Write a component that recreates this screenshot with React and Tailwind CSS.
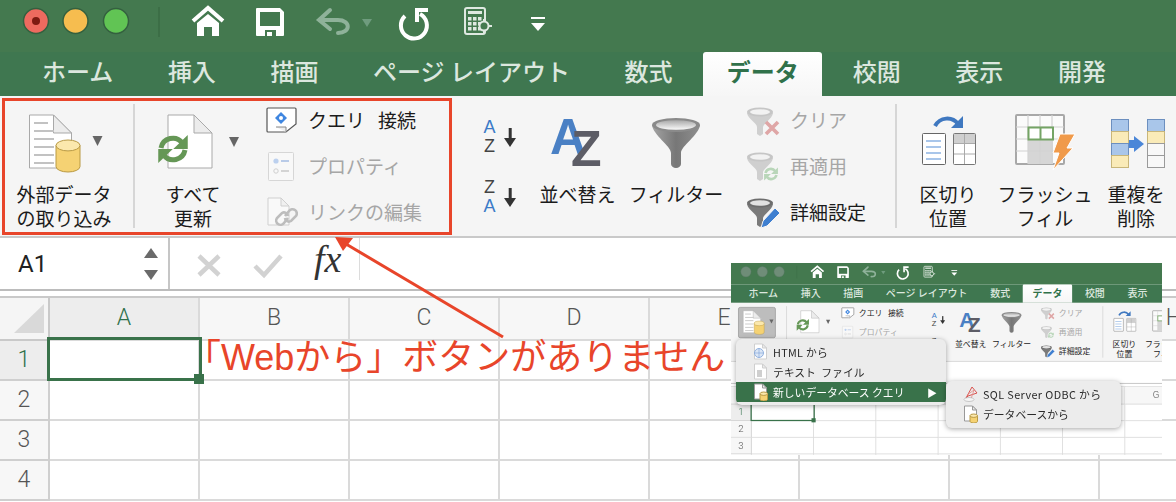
import React from "react";

const Ico = ({ x = 0, y = 0, w, h, children }) => (
  <svg width={w} height={h} viewBox={`${x} ${y} ${w} ${h}`} className="relative block shrink-0">
    {children}
  </svg>
);

const Page = ({ x, y, w, h, f = 18, stroke = "#a9a9a9", fill = "#fff", fold = "#ececec" }) => (
  <g>
    <path d={`M${x} ${y} H${x + w - f} L${x + w} ${y + f} V${y + h} H${x} Z`} fill={fill} stroke={stroke} strokeWidth="1" />
    <path d={`M${x + w - f} ${y} V${y + f} H${x + w} Z`} fill={fold} stroke={stroke} strokeWidth="1" />
  </g>
);

const Cyl = ({ x, y, w, h }) => {
  const ry = w / 4.4;
  return (
    <g>
      <path d={`M${x} ${y + ry} V${y + h - ry} A${w / 2} ${ry} 0 0 0 ${x + w} ${y + h - ry} V${y + ry} Z`} fill="#f5d273" stroke="#b99a45" strokeWidth="1" />
      <ellipse cx={x + w / 2} cy={y + ry} rx={w / 2} ry={ry} fill="#fbe8ad" stroke="#b99a45" strokeWidth="1" />
    </g>
  );
};

const Sync = ({ cx, cy, r, sw, c }) => (
  <g fill="none" stroke={c} strokeWidth={sw}>
    <path d={`M${cx - r} ${cy - 1} A${r} ${r} 0 0 1 ${cx + r * 0.78} ${cy - r * 0.5}`} />
    <path d={`M${cx + r} ${cy + 1} A${r} ${r} 0 0 1 ${cx - r * 0.78} ${cy + r * 0.5}`} />
    <path d={`M${cx + r + sw * 0.55} ${cy - r - sw * 0.4} V${cy} H${cx + r * 0.02} Z`} fill={c} stroke="none" />
    <path d={`M${cx - r - sw * 0.55} ${cy + r + sw * 0.4} V${cy} H${cx - r * 0.02} Z`} fill={c} stroke="none" />
  </g>
);

const Funnel = ({ y, c1, c2, rim }) => (
  <g>
    <path d={`M747 ${y + 6} C748 ${y + 12} 757 ${y + 16} 757 ${y + 20} V${y + 27} L760 ${y + 29} L763 ${y + 27} V${y + 20} C764 ${y + 16} 772 ${y + 12} 773 ${y + 6} Z`} fill={c1} />
    <ellipse cx="760" cy={y + 5} rx="13" ry="4.5" fill={rim} />
    <ellipse cx="760" cy={y + 5} rx="10" ry="2.8" fill={c2} />
  </g>
);

const Dd = ({ x, y }) => <polygon points={`${x - 5},${y - 5} ${x + 5},${y - 5} ${x},${y + 5}`} fill="#666" />;

function TitleBar({ inset }) {
  return (
    <div className="flex h-[52px] items-start bg-[#44794f]">
      <Ico w={160} h={52}>
        {inset ? (
          <g fill="#6f8d78" stroke="#557560">
            <circle cx="36" cy="21" r="12.5" />
            <circle cx="75.5" cy="21" r="12.5" />
            <circle cx="116" cy="21" r="12.5" />
          </g>
        ) : (
          <g strokeWidth="1.5">
            <circle cx="36" cy="21" r="12.5" fill="#ee6a5f" stroke="#34603f" />
            <circle cx="36" cy="21" r="4" fill="#7e1a12" />
            <circle cx="75.5" cy="21" r="12.5" fill="#f6bd4f" stroke="#34603f" />
            <circle cx="116" cy="21" r="12.5" fill="#61c454" stroke="#34603f" />
          </g>
        )}
        <rect x="158.5" y="7" width="1" height="30" fill="#35643f" />
      </Ico>
      <Ico x={160} w={400} h={52}>
        <path d="M193 21 L208 8 L223 21" fill="none" stroke="#fff" strokeWidth="4" />
        <path d="M197 23 L208 14 L219 23 V36 H212 V27 H204 V36 H197 Z" fill="#fff" />
        <path d="M257 8 H280 L284 12 V35 Q284 36 283 36 H257 Q256 36 256 35 V9 Q256 8 257 8 Z" fill="#fff" />
        <rect x="260" y="12" width="20" height="14" fill="#44794f" />
        <rect x="265" y="30" width="11" height="6" fill="#44794f" />
        <rect x="267" y="32" width="5" height="4" fill="#fff" />
        <g fill="none" stroke="#8fb29a" strokeWidth="4" strokeLinecap="round">
          <path d="M330 10 L319 20 L330 29" />
          <path d="M320 20 H338 C351 20 351 33 338 33" />
        </g>
        <polygon points="362,19 372,19 367,27" fill="#6f9c7e" />
        <g fill="none" stroke="#fff" strokeWidth="4">
          <path d="M405 16 A13 13 0 1 0 420 14" />
          <path d="M428 10 H417 V22" />
        </g>
        <rect x="465" y="8" width="20" height="26" rx="2" fill="#44794f" stroke="#dfe9e1" strokeWidth="2" />
        <rect x="468" y="11" width="14" height="3" fill="#dfe9e1" />
        <g fill="#dfe9e1">
          {[17, 22, 27].map((yy) =>
            [468, 473, 478].map((xx) => <rect key={`${xx}-${yy}`} x={xx} y={yy} width="3.5" height="3.5" />)
          )}
        </g>
        <circle cx="484" cy="26" r="4.5" fill="#44794f" stroke="#dfe9e1" strokeWidth="2" />
        <path d="M484 19 V21 M484 31 V33 M489 26 H492" stroke="#dfe9e1" strokeWidth="2" />
        <rect x="531" y="17" width="14" height="2" fill="#fff" />
        <polygon points="531,23 545,23 538,31" fill="#fff" />
      </Ico>
    </div>
  );
}

function Tabs() {
  const tab = "px-[24px] text-[24px] leading-[38px] font-medium text-[#dce7df] whitespace-nowrap";
  return (
    <div className="flex h-[44px] gap-[6.6px] bg-[#3f7750] pl-[18px]">
      <div className={tab}>ホーム</div>
      <div className={tab}>挿入</div>
      <div className={tab}>描画</div>
      <div className={tab}>ページ レイアウト</div>
      <div className={tab}>数式</div>
      <div className="rounded-t-[3px] bg-gradient-to-b from-white to-[#f6f6f6] px-[23.5px] text-[24px] font-bold leading-[38px] text-[#30714a]">データ</div>
      <div className={tab}>校閲</div>
      <div className={tab}>表示</div>
      <div className={tab}>開発</div>
    </div>
  );
}

const Large = ({ className, lines, children, bg }) => (
  <div className={`relative flex shrink-0 flex-col items-center ${className}`}>
    {bg}
    {children}
    <div className="whitespace-nowrap text-center text-[19px] leading-[24px] text-[#1b1b1b]">
      {lines.map((l) => (
        <div key={l}>{l}</div>
      ))}
    </div>
  </div>
);

const Small = ({ icon, children, dim, gap }) => (
  <div className={`flex h-[46px] items-center text-[19px] whitespace-nowrap ${gap} ${dim ? "text-[#a6a6a6]" : "text-[#1b1b1b]"}`}>
    {icon}
    <div>{children}</div>
  </div>
);

const Sep = ({ className }) => <div className={`mt-[8px] h-[124px] w-[2px] shrink-0 bg-[#d6d6d6] ${className}`} />;

function Ribbon({ selected }) {
  return (
    <div className="flex h-[142px] border-b-2 border-[#c9c9c9] bg-[#f5f5f5] pl-[4px]">
      <Large
        className="w-[120px]"
        lines={["外部データ", "の取り込み"]}
        bg={selected ? <div className="absolute left-[13px] top-[10px] h-[75px] w-[91px] rounded-[5px] border-2 border-[#9f9f9f] bg-[#bdbdbd]" /> : null}
      >
        <Ico x={4} y={96} w={120} h={86}>
          <Page x={29.5} y={115} w={42} h={53} />
          <g fill="#c2c2c2">
            {[122, 130, 138, 146, 154, 162].map((y) => (
              <rect key={y} x="34" y={y} width={y < 130 ? 14 : 20} height="2" />
            ))}
          </g>
          <Cyl x={56} y={140} w={24} h={32} />
          <Dd x={97.5} y={141} />
        </Ico>
      </Large>
      <Sep className="ml-[9px]" />
      <Large className="ml-[8px] w-[100px]" lines={["すべて", "更新"]}>
        <Ico x={143} y={96} w={100} h={86}>
          <Page x={168} y={115} w={44} h={53} />
          <Sync cx={173} cy={149} r={12} sw={5} c="#659756" />
          <Dd x={234} y={142} />
        </Ico>
      </Large>
      <div className="ml-[21px] w-[212px] shrink-0 pt-px">
        <Small
          gap="gap-[4px]"
          icon={
            <Ico x={264} y={97} w={40} h={46}>
              <path d="M268 108 H295 a1 1 0 0 1 1 1 V124 L286 132 H268 a1 1 0 0 1 -1 -1 V109 a1 1 0 0 1 1 -1 Z" fill="#fff" stroke="#555" strokeWidth="1.2" />
              <path d="M276 127 H286 V132" fill="#eee" stroke="#888" />
              <path d="M281 112 L287 118 L281 124 L275 118 Z" fill="#3f86e0" />
              <circle cx="281" cy="118" r="2" fill="#fff" />
            </Ico>
          }
        >
          クエリ<span className="ml-[13px]">接続</span>
        </Small>
        <Small
          dim
          gap="gap-[4px]"
          icon={
            <Ico x={264} y={143} w={40} h={46}>
              <rect x="268.5" y="152.5" width="25" height="28" rx="1" fill="#f8f8f8" stroke="#d6d6d6" />
              <circle cx="276" cy="161" r="2.6" fill="#bcd0ee" />
              <circle cx="276" cy="171" r="2.2" fill="none" stroke="#cfcfcf" />
              <rect x="281" y="160" width="8" height="2" fill="#b9cbe8" />
              <rect x="281" y="170" width="8" height="2" fill="#d4d4d4" />
            </Ico>
          }
        >
          プロパティ
        </Small>
        <Small
          dim
          gap="gap-[4px]"
          icon={
            <Ico x={264} y={189} w={40} h={46}>
              <Page x={268} y={198} w={21} h={27} f={8} stroke="#cfcfcf" fill="#f9f9f9" fold="#f0f0f0" />
              <g fill="none" stroke="#bdbdbd" strokeWidth="2.6">
                <path d="M285 216 L289 211 A4 4 0 0 1 296 216 L291 221 A4 4 0 0 1 285 218" />
                <path d="M288 218 L284 223 A4 4 0 0 1 277 218 L282 213 A4 4 0 0 1 288 216" />
              </g>
            </Ico>
          }
        >
          リンクの編集
        </Small>
      </div>
      <div className="w-[59px] shrink-0">
        <Ico x={476} y={96} w={59} h={130}>
          <g fontFamily="'Liberation Sans',sans-serif" fontSize="18">
            <text x="483.5" y="133" fill="#3c7bc8">A</text>
            <text x="484" y="152" fill="#444">Z</text>
            <text x="484" y="193" fill="#444">Z</text>
            <text x="483.5" y="212" fill="#3c7bc8">A</text>
          </g>
          <g fill="#333">
            <rect x="508.7" y="128" width="3" height="12" />
            <polygon points="504,138 516,138 510,147" />
            <rect x="508.7" y="188" width="3" height="12" />
            <polygon points="504,198 516,198 510,207" />
          </g>
        </Ico>
      </div>
      <Large className="w-[85px]" lines={["並べ替え"]}>
        <Ico x={535} y={96} w={85} h={86}>
          <g fontFamily="'Liberation Sans',sans-serif" fontWeight="700" fontSize="50">
            <text x="550" y="154" fill="#4a80c4">A</text>
            <text x="571" y="166" fill="#5d5d66">Z</text>
          </g>
        </Ico>
      </Large>
      <Large className="w-[112px]" lines={["フィルター"]}>
        <Ico x={620} y={96} w={112} h={86}>
          <defs>
            <linearGradient id="fnl" x1="0" x2="1" y1="0" y2="0">
              <stop offset="0" stopColor="#a4a4a4" />
              <stop offset="0.5" stopColor="#777" />
              <stop offset="1" stopColor="#8f8f8f" />
            </linearGradient>
            <linearGradient id="fnt" x1="0" x2="0" y1="0" y2="1">
              <stop offset="0" stopColor="#a8a8a8" />
              <stop offset="1" stopColor="#fafafa" />
            </linearGradient>
          </defs>
          <path d="M652 125 C653 135 671 146 671 153 V164 A5 4 0 0 0 681 164 V153 C681 146 699 135 700 125 Z" fill="url(#fnl)" />
          <ellipse cx="676" cy="125" rx="24" ry="7" fill="#8a8a8a" />
          <ellipse cx="676" cy="125" rx="20" ry="4.8" fill="url(#fnt)" />
        </Ico>
      </Large>
      <div className="w-[162px] shrink-0 pt-px">
        <Small
          dim
          gap="gap-[4px]"
          icon={
            <Ico x={732} y={97} w={54} h={46}>
              <Funnel y={107} c1="#cfcfcf" c2="#f2f2f2" rim="#c6c6c6" />
              <path d="M766 122 L778 134 M778 122 L766 134" stroke="#dfa6a6" strokeWidth="3.6" />
            </Ico>
          }
        >
          クリア
        </Small>
        <Small
          dim
          gap="gap-[4px]"
          icon={
            <Ico x={732} y={143} w={54} h={46}>
              <Funnel y={152} c1="#cfcfcf" c2="#f2f2f2" rim="#c6c6c6" />
              <Sync cx={771} cy={174} r={5.5} sw={2.6} c="#b9d6b9" />
            </Ico>
          }
        >
          再適用
        </Small>
        <Small
          gap="gap-[4px]"
          icon={
            <Ico x={732} y={189} w={54} h={46}>
              <Funnel y={198} c1="#7a7a7a" c2="#e2e2e2" rim="#6d6d6d" />
              <path d="M775 208 L780 213 L767 226 L761 228 L763 221 Z" fill="#3f7fd0" stroke="#f5f5f5" strokeWidth="1" />
            </Ico>
          }
        >
          詳細設定
        </Small>
      </div>
      <Sep className="ml-[1px]" />
      <Large className="ml-[8px] w-[86px]" lines={["区切り", "位置"]}>
        <Ico x={905} y={96} w={86} h={86}>
          <path d="M935 126 C940 117 952 116 958 124" fill="none" stroke="#3f78c0" strokeWidth="4" />
          <polygon points="963,116 963,128 951,128" fill="#3f78c0" />
          <rect x="922.5" y="133.5" width="23" height="31" rx="1" fill="#fff" stroke="#666" />
          <g fill="#a9c6ea">
            {[140, 146, 152, 158].map((y) => (
              <rect key={y} x="926" y={y} width="15" height="2" />
            ))}
          </g>
          <rect x="953.5" y="133.5" width="22" height="31" rx="1" fill="#fff" stroke="#777" />
          <rect x="954" y="134" width="21" height="9" fill="#cfcfcf" />
          <path d="M964.5 134 V164 M954 143.5 H975 M954 154 H975" stroke="#aaa" />
        </Ico>
      </Large>
      <Large className="ml-[4px] w-[100px]" lines={["フラッシュ", "フィル"]}>
        <Ico x={995} y={96} w={100} h={86}>
          <rect x="1016" y="115" width="48" height="49" rx="1" fill="#fbfbfb" stroke="#a8a8a8" strokeWidth="2" />
          <rect x="1028" y="139" width="25" height="25" fill="#d6d6d6" />
          <path d="M1028 115 V164 M1040 115 V164 M1052 115 V164 M1016 127 H1064 M1016 139 H1064 M1016 151 H1064" stroke="#d2d2d2" strokeWidth="1.2" />
          <rect x="1028.5" y="127.5" width="24.5" height="12" fill="#fff" stroke="#74a465" strokeWidth="2" />
          <path d="M1040.5 127.5 V139.5" stroke="#74a465" strokeWidth="2" />
          <polygon points="1060,134 1075,134 1067,148 1073,148 1053,170 1059,153 1053,153" fill="#f09a4a" stroke="#fff" strokeWidth="1" />
        </Ico>
      </Large>
      <Large className="ml-[1px] w-[80px]" lines={["重複を", "削除"]}>
        <Ico x={1096} y={96} w={80} h={86}>
          {[
            [119, "#a9c6ea", "#6c8fbf"],
            [131, "#faebb8", "#c8b67a"],
            [143, "#a9c6ea", "#6c8fbf"],
            [155, "#faebb8", "#c8b67a"],
          ].map(([y, f, s]) => (
            <rect key={y} x="1111.5" y={y + 0.5} width="17" height="12" fill={f} stroke={s} />
          ))}
          {[
            [119, "#a9c6ea", "#6c8fbf"],
            [131, "#faebb8", "#c8b67a"],
            [143, "#f8f8f8", "#9a9a9a"],
            [155, "#f8f8f8", "#9a9a9a"],
          ].map(([y, f, s]) => (
            <rect key={y} x="1147.5" y={y + 0.5} width="17" height="12" fill={f} stroke={s} />
          ))}
          <polygon points="1129,140 1134,140 1134,136 1144,144 1134,152 1134,148 1129,148" fill="#4a86d8" />
        </Ico>
      </Large>
    </div>
  );
}

function FormulaBar() {
  return (
    <div className="flex h-[53px] border-b-2 border-[#bcbcbc] bg-white">
      <div className="flex w-[170px] shrink-0 items-center border-r-2 border-[#c6c6c6]">
        <div className="w-[138px] pl-[18px] font-['Roboto',sans-serif] text-[24px] text-[#222]">A1</div>
        <Ico x={138} y={238} w={30} h={51}>
          <polygon points="144,258 158,258 151,248" fill="#6a6a6a" />
          <polygon points="144,270 158,270 151,280" fill="#6a6a6a" />
        </Ico>
      </div>
      <Ico x={170} y={238} w={138} h={51}>
        <path d="M199 256 L219 275 M219 256 L199 275" stroke="#d2d2d2" strokeWidth="4.5" />
        <path d="M255 266 L264 275 L281 256" fill="none" stroke="#d2d2d2" strokeWidth="4.5" />
      </Ico>
      <div className="mb-[9px] flex w-[52px] shrink-0 items-center border-r border-[#dcdcdc] pl-[6px] font-['Liberation_Serif',serif] text-[38px] font-normal italic leading-none text-[#333]">
        fx
      </div>
    </div>
  );
}

const cols = ["A", "B", "C", "D", "E", "F", "G", "H"];

function Sheet() {
  const line = "border-r-2 border-b-2 border-[#dadada]";
  const label = "flex items-center justify-center font-['Roboto',sans-serif] font-light";
  return (
    <div className="relative mt-[5px] grid grid-cols-[50px_repeat(8,150px)] grid-rows-[43px_40px_40px_40px_40px] border-t-2 border-[#c9c9c9] bg-white">
      <div className="relative border-r-2 border-b-2 border-[#c9c9c9] bg-[#f5f5f5]">
        <svg width="48" height="41" className="block">
          <polygon points="14,35 44,35 44,6" fill="#d9d9d9" />
        </svg>
      </div>
      {cols.map((c, i) => (
        <div key={c} className={`${label} ${line} text-[23px] ${i === 0 ? "bg-[#ededed] text-[#30714a]" : "bg-[#f7f7f7] text-[#555]"}`}>
          {c}
        </div>
      ))}
      {[1, 2, 3, 4].map((r) => (
        <React.Fragment key={r}>
          <div className={`${label} border-r-2 border-b-2 border-[#cfcfcf] text-[23px] ${r === 1 ? "bg-[#ededed] text-[#30714a]" : "bg-[#f7f7f7] text-[#555]"}`}>{r}</div>
          {cols.map((c) => (
            <div key={c} className={line} />
          ))}
        </React.Fragment>
      ))}
      <div className="absolute left-[47px] top-[39px] h-[44px] w-[155px] border-[3px] border-[#39724a]" />
      <div className="absolute left-[194px] top-[76px] h-[10px] w-[10px] bg-[#39724a]" />
    </div>
  );
}

const ExcelWindow = ({ inset }) => (
  <div className="w-[1176px] bg-white">
    <TitleBar inset={inset} />
    <Tabs />
    <Ribbon selected={inset} />
    <FormulaBar />
    <Sheet />
  </div>
);

const MenuRow = ({ icon, children, active, arrow }) => (
  <div className={`flex h-[20px] items-center text-[10.8px] whitespace-nowrap ${active ? "bg-[#39724a] text-white" : "text-[#2a2a2a]"}`}>
    <div className="ml-[17px] mr-[5px] w-[15px] shrink-0">{icon}</div>
    <div className="flex-1">{children}</div>
    {arrow ? <div className="mr-[9px] text-[10px]">▶</div> : null}
  </div>
);

const Mini = ({ children, dim }) => (
  <Ico w={15} h={18}>
    <Page x={1.5} y={1} w={12} h={15} f={4} stroke={dim ? "#cfcfcf" : "#999"} />
    {children}
  </Ico>
);

function Menus() {
  return (
    <>
      <div className="absolute left-[5px] top-[76px] h-[66px] w-[210px] overflow-hidden rounded-[6px] bg-[#ececec] pt-[3px] shadow-[0_1px_5px_rgba(0,0,0,0.35)]">
        <MenuRow
          icon={
            <Mini dim>
              <circle cx="6" cy="10" r="4.5" fill="#dbe6f5" stroke="#7ea2d8" strokeWidth="0.8" />
              <path d="M1.5 10 H10.5 M6 5.5 V14.5" stroke="#7ea2d8" strokeWidth="0.6" />
            </Mini>
          }
        >
          <span className="tracking-[0.3px]">HTML から</span>
        </MenuRow>
        <MenuRow
          icon={
            <Mini dim>
              <rect x="4" y="7" width="5" height="7" fill="#cfcfcf" />
            </Mini>
          }
        >
          <span className="[word-spacing:3px]">テキスト ファイル</span>
        </MenuRow>
        <MenuRow
          active
          arrow
          icon={
            <Mini>
              <Cyl x={7} y={9} w={7.5} h={9} />
            </Mini>
          }
        >
          新しいデータベース クエリ
        </MenuRow>
      </div>
      <div className="absolute left-[215px] top-[118px] h-[47px] w-[175px] rounded-[6px] bg-[#ececec] pt-[3px] shadow-[0_1px_5px_rgba(0,0,0,0.35)]">
        <MenuRow
          icon={
            <Ico w={15} h={18}>
              <path d="M3 13 L9 2 L14 8 L5 11 Z" fill="none" stroke="#d9534f" strokeWidth="1" />
              <path d="M4 10 L11 5 L8 14" fill="none" stroke="#e58a86" strokeWidth="0.8" />
              <ellipse cx="6" cy="14.5" rx="5" ry="2" fill="#f5f5f5" stroke="#aaa" strokeWidth="0.6" />
            </Ico>
          }
        >
          <span className="tracking-[0.4px]">SQL Server ODBC から</span>
        </MenuRow>
        <MenuRow
          icon={
            <Mini>
              <Cyl x={7} y={9} w={7.5} h={9} />
            </Mini>
          }
        >
          データベースから
        </MenuRow>
      </div>
    </>
  );
}

export default function App() {
  return (
    <div className="relative h-[502px] w-[1176px] overflow-hidden bg-white font-['Noto_Sans_CJK_JP','Noto_Sans',sans-serif] blur-[0.35px]">
      <ExcelWindow />

      <div className="absolute left-[185px] top-[332px] whitespace-nowrap font-['Liberation_Sans','Noto_Sans_CJK_JP',sans-serif] text-[36px] leading-[52px] text-[#e8452a]">
        「Webから」ボタンがありません
      </div>

      <div className="absolute left-[2px] top-[98px] h-[137px] w-[450px] border-[3px] border-[#e8452a]" />

      <svg width="1176" height="502" className="pointer-events-none absolute left-0 top-0">
        <line x1="503" y1="337" x2="346" y2="244" stroke="#e8452a" strokeWidth="3" />
        <polygon points="335,237 353,238 343,251" fill="#e8452a" />
      </svg>

      <div className="absolute left-[731px] top-[263px] h-[192px] w-[431px] overflow-hidden bg-white">
        <div className="h-[463px] w-[1176px] origin-top-left scale-[0.415] blur-[0.6px]">
          <ExcelWindow inset />
        </div>
        <Menus />
      </div>
    </div>
  );
}
